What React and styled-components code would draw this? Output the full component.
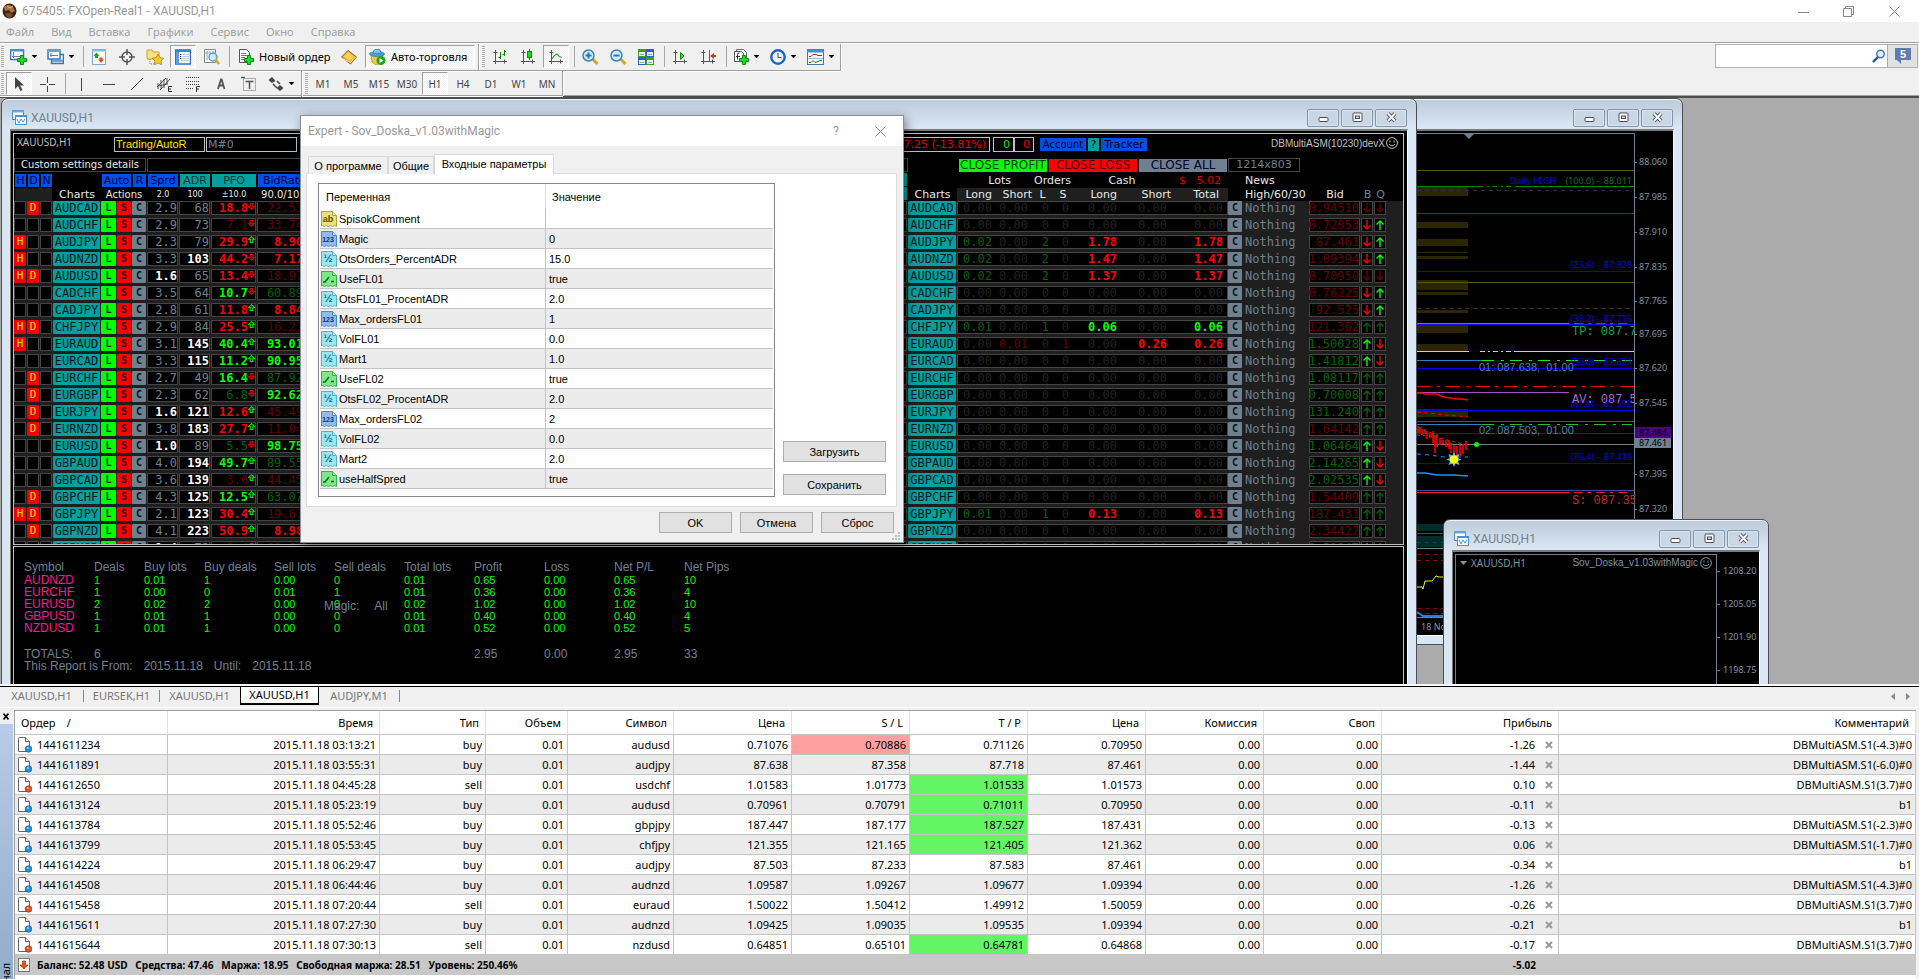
import React from 'react';
import styled, { createGlobalStyle, css } from 'styled-components';

const TAHOMA = '"Noto Sans", "Open Sans", sans-serif';
const SEGOE = 'Roboto, "Open Sans", sans-serif';
const MENU = '"Open Sans", "Noto Sans", sans-serif';
const ARIAL = '"Liberation Sans", Arial, sans-serif';
const VERDANA = '"DejaVu Sans", Verdana, sans-serif';
const MONO = '"DejaVu Sans Mono", "Liberation Mono", monospace';

const C = {
  face: '#f0f0f0',
  line: '#a0a0a0',
  slate: '#708090',
  teal: '#00a0a0',
  blue: '#0050e6',
  red: '#ff0000',
  lime: '#00ff00',
  dimRed: '#640000',
  dimGreen: '#006400',
  off: '#222222',
  grid: '#444444',
  board: '#1f1f1f',
};

const GlobalStyle = createGlobalStyle`
  *, *::before, *::after { box-sizing: border-box; }
  html, body, #root { height: 100%; }
  body { margin: 0; background: ${C.face}; color: #000; font: 11px/16px ${TAHOMA}; overflow: hidden; }
  button, input { font: inherit; color: inherit; margin: 0; padding: 0; border: 0; background: none; border-radius: 0; }
  table { border-collapse: separate; border-spacing: 0; table-layout: fixed; }
  th, td { padding: 0; font-weight: normal; }
  svg { display: block; flex: none; }
`;

const Page = styled.div`
  display: flex;
  flex-direction: column;
  height: 100vh;
  overflow: hidden;
`;

/* ---------- application title, menu, toolbars ---------- */

const TitleBar = styled.header`
  display: flex;
  align-items: center;
  flex: none;
  height: 22px;
  padding: 0 14px 0 2px;
  gap: 5px;
  background: #fff;
  color: #999;
  font: 12px/16px ${SEGOE};
`;
const AppTitle = styled.h1`
  margin: 0;
  flex: 1;
  font: inherit;
`;
const CaptionButton = styled.button`
  display: flex;
  justify-content: center;
  align-items: center;
  width: 40px;
  height: 20px;
  &:last-child { width: 32px; justify-content: flex-end; padding-right: 5px; }
`;
const MenuBar = styled.nav`
  display: flex;
  flex: none;
  align-items: center;
  gap: 17px;
  height: 20px;
  padding-left: 6px;
  color: #999;
  font: 11px/16px ${MENU};
`;
const Toolbars = styled.div`
  flex: none;
  display: flex;
  justify-content: space-between;
  align-items: flex-start;
  border-top: 1px solid ${C.line};
  border-bottom: 2px solid #4e4e4e;
  box-shadow: inset 0 1px #fff, inset 0 -1px ${C.line};
  padding-top: 1px;
`;
const Bars = styled.div`
  display: flex;
  flex-direction: column;
  align-items: flex-start;
`;
const Bar = styled.div`
  display: flex;
  align-items: stretch;
  height: ${(p) => p.$h}px;
  border-bottom: 1px solid ${C.line};
  border-right: 1px solid ${C.line};
  box-shadow: 0 1px #fff, 1px 0 #fff;
  padding: 1px 1px ${(p) => p.$h - 25}px 0;
`;
const Grip = styled.span`
  width: 3px;
  margin: 1px 1px 1px 1px;
  background: repeating-linear-gradient(#a9a9a9 0 1px, #f8f8f8 1px 2px);
`;
const BarEnd = styled.span`
  width: 2px;
  margin: -1px 1px -2px 1px;
  background: linear-gradient(90deg, ${C.line} 1px, #fff 1px);
`;
const Sep = styled.span`
  width: 1px;
  margin: 1px 1px 1px 4px;
  background: #a8a8a8;
`;
const pressed = css`
  border: 1px solid #a0a0a0;
  border-right-color: #fff;
  border-bottom-color: #fff;
  background: repeating-conic-gradient(#fff 0 25%, #f0f0f0 0 50%) 0 0 / 2px 2px;
`;
const Tool = styled.button`
  display: flex;
  align-items: center;
  justify-content: center;
  width: ${(p) => (p.$on ? 26 : 28)}px;
  margin: 0 ${(p) => (p.$on ? 1 : 0)}px;
  ${(p) => p.$on && pressed}
`;
const MenuTool = styled.button`
  display: flex;
  align-items: center;
  gap: 4px;
  width: 37px;
  padding-left: 5px;
`;
const WideTool = styled.button`
  display: flex;
  align-items: center;
  gap: 5px;
  width: ${(p) => p.$w}px;
  white-space: nowrap;
  padding-left: ${(p) => (p.$on ? 3 : 7)}px;
  margin: 0 ${(p) => (p.$on ? 2 : 0)}px;
  ${(p) => p.$on && pressed}
`;
const Period = styled(Tool)`
  font: 10px/14px ${TAHOMA};
  color: #444;
`;
const SearchBox = styled.div`
  display: flex;
  height: 24px;
  margin: 0 1px 0 0;
  border: 1px solid #b0b0b0;
  background: #fff;
  align-items: center;
`;
const SearchInput = styled.input`
  width: 156px;
  height: 20px;
  padding-left: 4px;
  outline: none;
`;
const ChatButton = styled.button`
  display: flex;
  align-items: center;
  justify-content: center;
  width: 30px;
  height: 22px;
  margin-left: 1px;
  border-left: 1px solid #b0b0b0;
  background: #e1e1e1;
`;

/* ---------- MDI desktop ---------- */

const Desktop = styled.main`
  position: relative;
  flex: 1;
  min-height: 0;
  overflow: hidden;
  background: #ababab;
`;
const Win = styled.section`
  position: absolute;
  left: ${(p) => p.$x}px;
  top: ${(p) => p.$y}px;
  width: ${(p) => p.$w}px;
  height: ${(p) => p.$h}px;
  display: flex;
  flex-direction: column;
  padding: 0 8px 8px;
  border: 1px solid #4b4f55;
  border-radius: 7px 7px 0 0;
  background: linear-gradient(#bccad9, #d9e6f3 28px, #d9e6f3);
  box-shadow: inset 0 1px #f2f6fa;
`;
const WinTitle = styled.header`
  display: flex;
  align-items: center;
  flex: none;
  height: 30px;
  padding: 7px 1px 0 2px;
  color: ${C.slate};
  font: 12px/20px ${SEGOE};
`;
const WinName = styled.h2`
  flex: 1;
  margin: 0 0 0 4px;
  font: inherit;
`;
const WinButtons = styled.div`
  display: flex;
  gap: 2px;
`;
const WinButton = styled.button`
  display: flex;
  align-items: center;
  justify-content: center;
  width: 32px;
  height: 18px;
  border: 1px solid #8293ab;
  border-radius: 2px;
  background: #c9d6e4;
  box-shadow: inset 0 0 0 1px #dbe5ef;
`;
const Client = styled.div`
  flex: 1;
  display: flex;
  flex-direction: column;
  min-height: 0;
  background: #000;
  border: 1px solid #777;
  border-top: 2px solid #7b7b7b;
  border-right-color: #fff;
  border-bottom-color: #fff;
  padding: ${(p) => p.$pad || '0'};
`;

/* ---------- trading board ---------- */

const Board = styled.div`
  flex: none;
  height: 412px;
  overflow: hidden;
  border: 1px solid #c0c0c0;
  color: #e8e8e8;
  font: 10px/13px ${VERDANA};
`;
const InfoBar = styled.div`
  display: flex;
  height: 24px;
  padding: 3px 5px 6px 3px;
  line-height: 13px;
`;
const ChartName = styled.span`
  width: 97px;
  color: #c0c0c0;
  font: 10px/11px ${TAHOMA};
`;
const Field = styled.span`
  width: ${(p) => p.$w}px;
  height: 15px;
  padding: 0 3px 0 1px;
  margin-left: ${(p) => p.$gap || 0}px;
  border: 1px solid #c0c0c0;
  color: ${(p) => p.$c};
  font: 11px/13px ${(p) => p.$font || VERDANA};
  text-align: ${(p) => p.$align || 'left'};
  white-space: nowrap;
`;
const InfoButton = styled.button`
  width: ${(p) => p.$w}px;
  height: 13px;
  margin: 1px 0 0 ${(p) => p.$gap || 2}px;
  background: ${(p) => p.$bg};
  color: ${(p) => p.$c || '#000028'};
  font: ${(p) => p.$size || 11}px/13px ${VERDANA};
  white-space: nowrap;
`;
const ExpertName = styled.span`
  display: flex;
  gap: 1px;
  margin-left: auto;
  color: #c0c0c0;
  font: 10px/13px ${ARIAL};
`;
const SettingsRow = styled.div`
  display: flex;
  height: 15px;
`;
const Outline = styled.span`
  width: ${(p) => p.$w}px;
  height: 14px;
  margin-left: ${(p) => p.$gap || 0}px;
  border: 1px solid ${C.grid};
  text-align: center;
  color: ${(p) => p.$c || '#e8e8e8'};
  font-size: ${(p) => p.$size || 10}px;
  line-height: 12px;
  white-space: nowrap;
`;
const Grids = styled.div`
  display: flex;
  background: linear-gradient(#000 28px, ${C.board} 28px);
`;
const BoardTable = styled.table`
  flex: none;
  width: ${(p) => p.$w}px;
  th { height: 14px; font: 11px/13px ${VERDANA}; overflow: visible; white-space: nowrap; }
  td { height: 17px; vertical-align: top; white-space: nowrap; }
`;
const Head = styled.div`
  height: 13px;
  margin: 0 ${(p) => (p.$join ? 0 : 1)}px;
  background: ${(p) => p.$bg || 'transparent'};
  color: ${(p) => p.$c || '#e8e8e8'};
  text-align: ${(p) => p.$align || 'center'};
  padding: 0 ${(p) => p.$pad || 0}px;
  font-size: ${(p) => p.$size || 11}px;
`;
const Cell = styled.div`
  height: 14px;
  margin: 0 1px 0 0;
  border: 1px solid ${C.grid};
  background: #000;
  color: ${(p) => p.$c || C.slate};
  font: ${(p) => (p.$b ? 'bold' : 'normal')} 12px/13px ${MONO};
  display: flex;
  justify-content: flex-end;
`;
const Chip = styled.button`
  display: block;
  width: calc(100% - 1px);
  height: 14px;
  background: ${(p) => p.$bg};
  color: ${(p) => p.$c || '#001818'};
  border-radius: 1px;
  font: ${(p) => (p.$b ? 'bold' : 'normal')} ${(p) => p.$size || 12}px/14px ${MONO};
  text-align: center;
`;
const Val = styled.div`
  height: 14px;
  border: 0 solid ${C.grid};
  border-width: 1px ${(p) => (p.$last ? 1 : 0)}px 1px ${(p) => (p.$first ? 1 : 0)}px;
  background: #000;
  color: ${(p) => p.$c || C.off};
  padding-right: 4px;
  text-align: right;
  font: ${(p) => (p.$b ? 'bold' : 'normal')} 12px/13px ${MONO};
`;
const News = styled.div`
  color: ${C.slate};
  padding-left: 2px;
  font: 12px/14px ${MONO};
`;
const Middle = styled.div`
  flex: 1;
  padding-right: 1px;
`;
const MiddleHead = styled.div`
  height: 13px;
  margin-bottom: 1px;
  background: ${C.teal};
`;
const MiddleRow = styled.div`
  height: 14px;
  margin-bottom: 3px;
  border: 1px solid ${C.grid};
  background: #000;
`;

/* ---------- report ---------- */

const Report = styled.div`
  position: relative;
  flex: 1;
  margin-top: 1px;
  padding: 14px 10px;
  border: 1px solid #c0c0c0;
  color: ${C.slate};
  font: 12px/13px ${ARIAL};
`;
const ReportTable = styled.table`
  width: 730px;
  th { text-align: left; height: 13px; white-space: nowrap; }
  td { height: 12px; line-height: 12px; font-size: 11px; color: ${C.lime}; }
  td:first-child { font-size: 12px; color: #ff1493; }
  tfoot td, tfoot td:first-child { height: 26px; font-size: 12px; color: ${C.slate}; vertical-align: bottom; }
`;
const ReportPeriod = styled.p`
  display: flex;
  gap: 11px;
  margin: 0;
`;
const MagicNote = styled.span`
  position: absolute;
  left: 310px;
  top: 53px;
  display: flex;
  gap: 15px;
`;

/* ---------- small chart window ---------- */

const SmallChart = styled.div`
  flex: 1;
  display: flex;
  color: #8593a1;
`;
const Plot = styled.div`
  flex: 1;
  display: flex;
  justify-content: space-between;
  align-items: flex-start;
  padding: 1px 4px 0 4px;
  border: 1px solid ${C.slate};
  font-size: 10px;
  line-height: 14px;
`;
const PlotLabel = styled.span`
  display: flex;
  align-items: center;
  gap: ${(p) => p.$gap}px;
  font-family: ${(p) => p.$font};
`;
const Axis = styled.div`
  width: 42px;
  padding-top: 9px;
`;
const Tick = styled.div`
  display: flex;
  align-items: center;
  gap: 3px;
  height: 16px;
  margin-bottom: 17px;
  font: 9px/16px ${TAHOMA};
  &::before { content: ''; width: 3px; height: 1px; background: ${C.slate}; }
`;

/* ---------- dialog ---------- */

const Dialog = styled.section`
  position: absolute;
  left: 300px;
  top: 17px;
  width: 604px;
  height: 428px;
  display: flex;
  flex-direction: column;
  border: 1px solid #8a939c;
  background: ${C.face};
  box-shadow: 2px 3px 10px rgba(0, 0, 0, 0.45);
  font: 11px/16px ${ARIAL};
`;
const DialogTitle = styled.header`
  display: flex;
  align-items: center;
  flex: none;
  height: 30px;
  padding: 0 17px 0 7px;
  background: #fff;
  color: #999;
  font: 12px/16px ${SEGOE};
`;
const DialogName = styled.h2`
  flex: 1;
  margin: 0;
  font: inherit;
`;
const DialogButton = styled.button`
  margin-left: 36px;
`;
const Tabs = styled.div`
  display: flex;
  align-items: flex-end;
  height: 28px;
  padding: 0 7px;
`;
const Tab = styled.button`
  height: ${(p) => (p.$on ? 21 : 18)}px;
  width: ${(p) => p.$w}px;
  margin-bottom: ${(p) => (p.$on ? -1 : 0)}px;
  border: 1px solid #d9d9d9;
  border-bottom: 0;
  background: ${(p) => (p.$on ? '#fff' : C.face)};
  padding-bottom: ${(p) => (p.$on ? 3 : 0)}px;
  z-index: 1;
  & + & { border-left: ${(p) => (p.$on ? '1px solid #d9d9d9' : '0')}; }
`;
const Pane = styled.div`
  display: flex;
  flex: none;
  height: 334px;
  margin: -1px 6px 0 5px;
  padding: 9px 10px 10px 11px;
  border: 1px solid #dcdcdc;
  background: #fff;
  gap: 8px;
`;
const ParamBox = styled.div`
  flex: 1;
  height: 314px;
  padding: 0 1px;
  border: 1px solid #828790;
`;
const ParamTable = styled.table`
  width: 100%;
  th { height: 25px; text-align: left; padding-left: 6px; }
  th:first-child { border-right: 1px solid #e2e2e2; }
  td { height: 20px; border-bottom: 1px solid #c4c4c4; padding-left: 3px; }
  td:first-child { border-right: 1px solid #c4c4c4; padding-left: 1px; }
  tr:nth-child(even) td { background: #ebebeb; }
`;
const ParamName = styled.span`
  display: flex;
  align-items: center;
  gap: 2px;
`;
const SideButtons = styled.div`
  display: flex;
  flex-direction: column;
  justify-content: flex-end;
  gap: 12px;
  padding-bottom: 1px;
`;
const PushButton = styled.button`
  width: ${(p) => p.$w || 73}px;
  height: 21px;
  border: 1px solid #adadad;
  background: #e1e1e1;
`;
const DialogFooter = styled.footer`
  display: flex;
  justify-content: flex-end;
  gap: 8px;
  padding: 5px 9px 0;
`;
const SizeGrip = styled.span`
  position: absolute;
  right: 3px;
  bottom: 2px;
`;

/* ---------- chart tabs and terminal ---------- */

const ChartTabs = styled.nav`
  flex: none;
  display: flex;
  height: 22px;
  padding: 0 8px 2px 0;
  border-top: 1px solid #000;
  box-shadow: 0 -2px #f8f8f8, inset 0 -1px #fff;
  margin-top: 2px;
  color: #777;
`;
const ChartTab = styled.button`
  width: ${(p) => p.$w}px;
  height: 18px;
  ${(p) =>
    p.$on
      ? css`
          background: #fff;
          color: #000;
          border: 1px solid #000;
          border-width: 0 1px 2px 1px;
        `
      : css`
          &::after { content: ''; float: right; width: 1px; height: 12px; margin-top: 2px; background: ${p.$bar ? '#888' : 'transparent'}; }
        `}
`;
const TabArrows = styled.span`
  display: flex;
  align-items: center;
  gap: 10px;
  margin-left: auto;
`;
const Terminal = styled.section`
  flex: none;
  display: flex;
  height: 271px;
  padding-top: 2px;
`;
const Side = styled.aside`
  display: flex;
  flex-direction: column;
  width: 14px;
  flex: none;
`;
const SideClose = styled.button`
  display: flex;
  padding: 3px 0 0 3px;
  height: 14px;
`;
const SideLabel = styled.div`
  flex: 1;
  width: 13px;
  display: flex;
  align-items: flex-end;
  overflow: hidden;
  background: linear-gradient(#b5cde8, #93acca);
`;
const SideText = styled.span`
  writing-mode: vertical-rl;
  transform: rotate(180deg);
  line-height: 12px;
  height: 16px;
  direction: rtl;
`;
const OrdersBox = styled.div`
  flex: 1;
  border: 1px solid ${C.line};
  border-width: 1px 0 0 1px;
  margin-right: 3px;
  background: #fff;
  overflow: hidden;
`;
const Orders = styled.table`
  width: 100%;
  th, td { text-align: right; white-space: nowrap; }
  th { height: 24px; padding-right: 6px; border-right: 1px solid #e2e2e2; border-bottom: 1px solid #c4c4c4; }
  th:first-child { text-align: left; padding-left: 6px; }
  tbody td { height: 20px; padding-right: 3px; border-right: 1px solid #c4c4c4; border-bottom: 1px solid #c4c4c4; }
  tbody tr:nth-child(even) td { background: #ebebeb; }
  tbody tr td[data-hit='sl'] { background: #ffa0a0; }
  tbody tr:nth-child(n) td[data-hit='tp'] { background: #64f564; }
  tfoot td { height: 20px; background: #c8c8c8; font-weight: bold; font-size: 10px; }
`;
const OrderId = styled.span`
  display: flex;
  align-items: center;
  gap: 5px;
  padding-left: 3px;
`;
const ProfitCell = styled.span`
  display: flex;
  align-items: center;
  justify-content: flex-end;
  gap: 10px;
  padding-right: 2px;
`;
const Summary = styled.span`
  display: flex;
  align-items: center;
  gap: 6px;
  padding-left: 3px;
`;

/* ---------- icons ---------- */

const Svg = ({ w = 16, h = 16, children, ...rest }) => (
  <svg width={w} height={h} viewBox={`0 0 ${w} ${h}`} aria-hidden="true" {...rest}>
    {children}
  </svg>
);
const Arrow = () => (
  <Svg w={7} h={4}>
    <path d="M1 0h5L3.500 3z" fill="#000" stroke="#000" strokeWidth=".5" />
  </Svg>
);
const Plus = ({ x = 0, y = 0 }) => (
  <path transform={`translate(${x} ${y})`} d="M3.500 .5h3v3h3v3h-3v3h-3v-3h-3v-3h3z" fill="#15e030" stroke="#0a8a0a" />
);
const axes = <path d="M3.500 1v14M1 12.500h14M1.500 3.500h4M12.500 10.500v4" stroke="#555" fill="none" />;

const icons = {
  app: (
    <Svg w={15} h={16}>
      <ellipse cx="7.500" cy="8" rx="7" ry="7.500" fill="#3b2418" />
      <path d="M2 4q5-4 9 0l2 4-4 2-2-3-4 1z" fill="#b0713c" />
      <path d="M3 11q4-3 8 1-3 4-6 2z" fill="#7a4a2c" />
      <path d="M5 3l3 2 3-2" stroke="#d9b88c" fill="none" />
    </Svg>
  ),
  newChart: (
    <Svg w={17}>
      <rect x="0.500" y="0.500" width="13" height="10" fill="#fff" stroke="#3a78b8" strokeWidth="1.500" />
      <path d="M0 0h14v2.500H0z" fill="#4a8ccc" />
      <path d="M3.500 3v6M2 7.500h8" stroke="#77a" />
      <Plus x={7} y={6} />
    </Svg>
  ),
  profiles: (
    <Svg w={17}>
      <rect x="4.500" y="5.500" width="12" height="9" fill="#dcebf8" stroke="#3a78b8" strokeWidth="1.500" />
      <rect x="1" y="1" width="12" height="9" fill="#fff" stroke="#3a78b8" strokeWidth="1.500" />
      <path d="M1 1h12v2H1zM5 11h11v2H5z" fill="#6aa2d8" />
      <path d="M4 4v4M3 6.500h8" stroke="#77a" />
    </Svg>
  ),
  market: (
    <Svg>
      <rect x="1.500" y="0.500" width="13" height="15" fill="#fff" stroke="#7aa7d8" />
      <path d="M1 .5h14v2H1z" fill="#8ab8e8" />
      <path d="M2.500 7l3-3.500 3 3.500H7v2H4V7z" fill="#18a818" />
      <path d="M7 10.500l3 3.500 3-3.500h-1.500V8.500h-3v2z" fill="#e04a1c" />
    </Svg>
  ),
  target: (
    <Svg>
      <circle cx="8" cy="8" r="5" fill="none" stroke="#555" strokeWidth="1.500" />
      <path d="M8 0v6M8 10v6M0 8h6M10 8h6" stroke="#555" strokeWidth="1.500" />
    </Svg>
  ),
  favorites: (
    <Svg w={18}>
      <path d="M1 1h5l1 2h6v7H1z" fill="#fbe27a" stroke="#c9a227" />
      <path d="M4 10v5h4" stroke="#777" strokeDasharray="1 1" fill="none" />
      <path d="M12 5l1.900 3.600 3.900.6-2.800 2.800.7 3.800L12 14.100 8.300 15.800l.7-3.800-2.800-2.800 3.900-.6z" fill="#f7c928" stroke="#a67c00" strokeWidth=".7" />
    </Svg>
  ),
  navigator: (
    <Svg>
      <rect x="0.500" y="1" width="15" height="14" fill="#fff" stroke="#2f6fc0" strokeWidth="1.500" />
      <path d="M1 1h14v2H1z" fill="#3b84d8" />
      <path d="M1 3h3v12H1z" fill="#5d9de0" />
      <path d="M6 5.500h8M6 7.500h8M6 9.500h8M6 11.500h8" stroke="#b8cfe8" />
      <path d="M5 5.500h1M5 7.500h1M5 9.500h1" stroke="#223" />
    </Svg>
  ),
  tester: (
    <Svg w={17}>
      <path d="M1.500 .5h11v13h-11z" fill="#fff" stroke="#888" />
      <path d="M4 2v9M7 2v5M10 2v6M2 4h4" stroke="#8aa" />
      <circle cx="10" cy="8" r="4" fill="#cfe8fa" fillOpacity=".85" stroke="#5a9bd0" strokeWidth="1.400" />
      <path d="M13 11l3 4" stroke="#d8a520" strokeWidth="2.400" />
    </Svg>
  ),
  order: (
    <Svg>
      <path d="M1.500 .5h7l3 3v10h-10z" fill="#fff" stroke="#555" />
      <path d="M3 4.500h5M3 6.500h7M3 8.500h4M3 10.500h3" stroke="#777" />
      <Plus x={6} y={6} />
    </Svg>
  ),
  book: (
    <Svg>
      <path d="M.500 8L7 1.500l8.500 6.500-6 7z" fill="#e8a820" stroke="#8f6310" />
      <path d="M2.500 7.500L7 3l6 4.500-4 4.500z" fill="#f8d060" />
      <path d="M1.500 9.500l8 4 5-5.500" stroke="#fff3c8" fill="none" strokeWidth=".8" />
    </Svg>
  ),
  robot: (
    <Svg w={17}>
      <path d="M2 6h12l-2 8-5 2-4-3z" fill="#f0c93c" stroke="#b08a12" strokeWidth=".7" />
      <ellipse cx="8" cy="5" rx="7.500" ry="2.500" fill="#4aa0d8" stroke="#2a78b0" strokeWidth=".7" />
      <path d="M4 4q0-4 4-4t4 4q-4 1.500-8 0z" fill="#7cc4ee" stroke="#2a78b0" strokeWidth=".7" />
      <circle cx="12" cy="11.500" r="4.500" fill="#18a818" />
      <path d="M10.500 9l4 2.500-4 2.500z" fill="#fff" />
    </Svg>
  ),
  bars: (
    <Svg>
      {axes}
      <path d="M8.500 3v7M6.500 8.500h2M12.500 1v6M10.500 5.500h2M12 2.500h2" stroke="#0a8a0a" fill="none" />
    </Svg>
  ),
  candles: (
    <Svg>
      {axes}
      <path d="M9.500 0v11" stroke="#0a8a0a" />
      <rect x="7.500" y="2.500" width="4" height="6" fill="#22d822" stroke="#0a8a0a" />
    </Svg>
  ),
  lineChart: (
    <Svg>
      {axes}
      <path d="M4 10q4-7 6-4t4 2" stroke="#2aa02a" fill="none" strokeWidth="1.200" />
    </Svg>
  ),
  zoomIn: (
    <Svg w={17}>
      <path d="M10.500 10l5 5" stroke="#d8a520" strokeWidth="3" />
      <circle cx="6.500" cy="6.500" r="5.500" fill="#d3ecfb" stroke="#3b84c0" strokeWidth="1.500" />
      <path d="M3.500 6.500h6M6.500 3.500v6" stroke="#2f76b8" strokeWidth="2" />
    </Svg>
  ),
  zoomOut: (
    <Svg w={17}>
      <path d="M10.500 10l5 5" stroke="#d8a520" strokeWidth="3" />
      <circle cx="6.500" cy="6.500" r="5.500" fill="#d3ecfb" stroke="#3b84c0" strokeWidth="1.500" />
      <path d="M3.500 6.500h6" stroke="#2f76b8" strokeWidth="2" />
    </Svg>
  ),
  tile: (
    <Svg>
      <path d="M0 0h8v8H0zM8 8h8v8H8z" fill="#3fa01c" />
      <path d="M8 0h8v8H8zM0 8h8v8H0z" fill="#2a62c8" />
      <path d="M1 3h6v4H1zM9 3h6v4H9zM1 11h6v4H1zM9 11h6v4H9z" fill="#e9f2fb" />
      <path d="M2 5.500h4M10 5.500h4M2 13.500h4M10 13.500h4" stroke="#8ab" />
    </Svg>
  ),
  shift: (
    <Svg>
      {axes}
      <path d="M8.500 3.500v7l3.500-3.500z" fill="#3ae03a" stroke="#0a8a0a" />
    </Svg>
  ),
  scroll: (
    <Svg>
      {axes}
      <path d="M9.500 1v11" stroke="#3070b0" />
      <path d="M10 7l4-3v2h2v2h-2v2z" fill="#d03a10" />
    </Svg>
  ),
  indicators: (
    <Svg>
      <path d="M3.500 2.500v-2h7l3 3v8h-3" fill="#fff" stroke="#666" />
      <path d="M1.500 2.500h7l2 2v8h-9z" fill="#fff" stroke="#555" />
      <path d="M6.500 4q-2-.5-2 1.500v5M3 7.500h4" stroke="#333" fill="none" />
      <Plus x={6} y={6} />
    </Svg>
  ),
  clock: (
    <Svg>
      <circle cx="8" cy="8" r="6.700" fill="#eaf2fa" stroke="#1c64c0" strokeWidth="2.400" />
      <path d="M8 4v4.500h3.500" stroke="#444" fill="none" />
    </Svg>
  ),
  template: (
    <Svg w={17}>
      <rect x="0.500" y="0.500" width="16" height="15" fill="#f6fbff" stroke="#3a78b8" />
      <path d="M0 .5h17v3H0z" fill="#4a8ccc" />
      <path d="M2 7.500h2l2-2h3l2 1h4" stroke="#a03010" fill="none" />
      <path d="M1 9.500h15" stroke="#8ab8e8" />
      <path d="M2 13.500h2l2-2 2 2 3-1 2-1h2" stroke="#208020" fill="none" />
    </Svg>
  ),
  cursor: (
    <Svg>
      <path d="M4 1v12l3-3 2.500 5 2-1L9 9.500h4z" fill="#444" />
    </Svg>
  ),
  cross: (
    <Svg>
      <path d="M8.500 1v6M8.500 10v6M1 8.500h6M10 8.500h6" stroke="#444" />
    </Svg>
  ),
  vline: (
    <Svg>
      <path d="M8.500 2v13" stroke="#444" />
    </Svg>
  ),
  hline: (
    <Svg>
      <path d="M2 8.500h12" stroke="#444" />
    </Svg>
  ),
  trend: (
    <Svg>
      <path d="M2 14L14 2" stroke="#444" />
    </Svg>
  ),
  channel: (
    <Svg>
      <path d="M0 11L9 2M3 14L13 3M1 7v6M4 4v9M7 3v9M10 2v6M1 10l10-2" stroke="#444" strokeWidth=".9" />
      <path d="M15 10.500h-3.500v5H15M11.500 13H14" stroke="#333" fill="none" />
    </Svg>
  ),
  fibo: (
    <Svg>
      <path d="M1 1.500h14M1 5.500h14M1 8.500h14M1 12.500h8" stroke="#444" strokeDasharray="1 1" />
      <path d="M15 10.500h-3.500V16M11.500 13H14" stroke="#333" fill="none" />
    </Svg>
  ),
  letterA: (
    <Svg>
      <path d="M5 13L8 3.500h.600L11.500 13M6 9.500h5" stroke="#555" fill="none" strokeWidth="1.800" />
    </Svg>
  ),
  label: (
    <Svg>
      <rect x="2.500" y="2.500" width="12" height="12" fill="none" stroke="#666" strokeDasharray="1 1" />
      <path d="M0 1.500h4M4.500 5.500h8M8.500 5v8" stroke="#555" strokeWidth="1.500" />
    </Svg>
  ),
  shapes: (
    <Svg>
      <path d="M4 1l3.500 4L4 7 .5 4zM12 9l3.500 3L12 15 8.500 12z" fill="#444" />
      <path d="M5 8l4 4M9 5l3 3" stroke="#444" strokeWidth="1.500" />
    </Svg>
  ),
  search: (
    <Svg w={14} h={14}>
      <circle cx="8.500" cy="5" r="3.700" fill="#eaf4ff" stroke="#3a78d0" strokeWidth="1.500" />
      <path d="M6 8l-5 5" stroke="#1c50b0" strokeWidth="2.400" />
    </Svg>
  ),
  chart: (
    <Svg w={15} h={15}>
      <rect x="0.500" y="0.500" width="11" height="9" fill="#fff" stroke="#4a90d8" />
      <path d="M0 .5h12v2H0z" fill="#6aa8e8" />
      <rect x="3.500" y="5.500" width="11" height="9" fill="#fff" stroke="#4a90d8" />
      <path d="M3 5.500h12v1.500H3z" fill="#4a90d8" />
      <path d="M5 9l2 4 2-4 2 3 2-3" stroke="#4a90d8" fill="none" />
    </Svg>
  ),
  smile: (
    <Svg w={12} h={12}>
      <circle cx="6" cy="6" r="5.400" fill="none" stroke="currentColor" />
      <path d="M4 3.500v2M8 3.500v2M3 7q3 3.500 6 0" stroke="currentColor" fill="none" />
    </Svg>
  ),
  min: (
    <Svg w={11} h={11}>
      <rect x="1" y="5.500" width="9" height="4" rx="1" fill="#fff" stroke="#4c4c60" />
    </Svg>
  ),
  max: (
    <Svg w={11} h={11}>
      <rect x="1" y="1" width="9" height="8.500" rx="1" fill="#fff" stroke="#4c4c60" />
      <rect x="3.500" y="4" width="4" height="2.500" fill="#cddae8" stroke="#4c4c60" />
    </Svg>
  ),
  close: (
    <Svg w={11} h={11}>
      <path d="M2 1.500l7 7.500M9 1.500L2 9" stroke="#4c4c60" strokeWidth="4" />
      <path d="M2 1.500l7 7.500M9 1.500L2 9" stroke="#fff" strokeWidth="2" />
    </Svg>
  ),
};

const ParamIcon = ({ kind }) => {
  const tone = {
    ab: ['#ece07c', '#b5a32c', '#5c4d00'],
    int: ['#8dbdf0', '#4b88c8', '#0a3570'],
    real: ['#9be6f2', '#4fb4c8', '#0e6a80'],
    bool: ['#7fe68a', '#35b14a', '#0b6a1c'],
  }[kind];
  const mark = { ab: 'ab', int: '123', real: '½' }[kind];
  return (
    <Svg>
      <path d="M.5.500h11l4 4v11l-2-1-2 1-2-1-2 1-2-1-2 1-2-1-1 .5z" fill={tone[0]} stroke={tone[1]} />
      <path d="M11.500.500v4h4" fill="#fff" fillOpacity=".6" stroke={tone[1]} />
      {mark ? (
        <text x="7" y="11" textAnchor="middle" fontSize={{ ab: 9, int: 7, real: 11 }[kind]} fontWeight="bold" fontFamily="Liberation Sans" fill={tone[2]}>
          {mark}
        </text>
      ) : (
        <path d="M2 11h2l4-5M10 10.500h3" stroke={tone[2]} strokeWidth="1.500" fill="none" />
      )}
    </Svg>
  );
};

const OrderIcon = ({ buy }) => (
  <Svg w={14} h={16}>
    <path d="M.5 1.500q0-1 1-1h6l4 4v10h-11z" fill="#fff" stroke="#666" />
    <path d="M7.500.500v4h4" fill="#eee" stroke="#666" />
    <circle cx="10.500" cy="12" r="3.300" fill={buy ? '#1c94e0' : '#e8501c'} stroke={buy ? '#0a5c9c' : '#a02c08'} strokeWidth=".7" />
    <circle cx="9.800" cy="11" r="1" fill="#fff" fillOpacity=".6" />
  </Svg>
);

const PfoArrow = ({ up }) => (
  <Svg w={7} h={8}>
    {up ? (
      <path d="M3.500 .7L6.300 3.500H4.800V6.500H2.200V3.500H.7z" fill="none" stroke="#00e000" strokeWidth="1.200" />
    ) : (
      <path d="M3.500 7.300L6.300 4.500H4.800V1.500H2.200v3H.7z" fill="none" stroke="#e00000" strokeWidth="1.200" />
    )}
  </Svg>
);

const Trend = ({ dir }) => {
  const up = dir === 'U' || dir === 'u';
  const color = { U: '#00ff00', u: '#006400', D: '#ff0000', d: '#640000' }[dir];
  return (
    <Svg w={10} h={12}>
      <path d={up ? 'M5 11V2M1.500 5.500L5 2l3.500 3.500' : 'M5 1v9M1.500 6.500L5 10l3.500-3.500'} stroke={color} fill="none" strokeWidth="1.400" />
    </Svg>
  );
};

/* ---------- data ---------- */

const R = C.red;
const G = '#00ff00';
const r = C.dimRed;
const g = C.dimGreen;

// symbol, flags, spread, adr, pfo, pfo colour, pfo arrow up, rating, rating colour
const pairs = [
  ['AUDCAD', 'D', '2.9', '68', '18.8', R, 0, '22.51', r],
  ['AUDCHF', '', '2.9', '73', '7.1', r, 0, '33.74', r],
  ['AUDJPY', 'H', '2.3', '79', '29.9', R, 1, '8.90', R],
  ['AUDNZD', 'H', '3.3', '103', '44.2', R, 0, '7.17', R],
  ['AUDUSD', 'HD', '1.6', '65', '13.4', R, 0, '18.97', r],
  ['CADCHF', '', '3.5', '64', '10.7', G, 0, '60.89', g],
  ['CADJPY', '', '2.8', '61', '11.8', R, 1, '8.84', R],
  ['CHFJPY', 'HD', '2.9', '84', '25.5', R, 1, '16.21', r],
  ['EURAUD', 'H', '3.1', '145', '40.4', G, 1, '93.01', G],
  ['EURCAD', '', '3.3', '115', '11.2', G, 1, '90.95', G],
  ['EURCHF', 'D', '2.7', '49', '16.4', G, 0, '87.92', g],
  ['EURGBP', 'D', '2.3', '62', '6.8', g, 0, '92.62', G],
  ['EURJPY', 'D', '1.6', '121', '12.6', R, 1, '45.49', r],
  ['EURNZD', 'D', '3.8', '183', '27.7', R, 1, '11.04', r],
  ['EURUSD', '', '1.0', '89', '5.5', g, 0, '98.75', G],
  ['GBPAUD', '', '4.0', '194', '49.7', G, 1, '89.55', g],
  ['GBPCAD', '', '3.6', '139', '3.0', r, 1, '44.45', r],
  ['GBPCHF', 'D', '4.3', '125', '12.5', G, 1, '63.07', g],
  ['GBPJPY', 'HD', '2.1', '123', '30.4', R, 1, '19.61', r],
  ['GBPNZD', 'D', '4.1', '223', '50.9', R, 1, '8.98', R],
  ['GBPUSD', '', '1.4', '78', '2.4', r, 0, '18.66', r],
];

const quotes = [
  ['0.94510', r, 'dd'], ['0.72053', r, 'DU'], ['87.461', r, 'DU'], ['1.09394', r, 'DU'],
  ['0.70950', r, 'dd'], ['0.76225', r, 'DU'], ['92.525', r, 'DU'], ['121.362', r, 'uu'],
  ['1.50028', g, 'UD'], ['1.41812', g, 'UD'], ['1.08117', g, 'uu'], ['0.70008', g, 'uu'],
  ['131.240', g, 'uu'], ['1.64142', r, 'uu'], ['1.06464', g, 'UD'], ['2.14265', g, 'UD'],
  ['2.02535', g, 'UD'], ['1.54409', r, 'uu'], ['187.431', r, 'uu'], ['2.34427', r, 'uu'],
  ['1.51847', g, 'UD'],
];

// lots long, lots short, orders long, orders short, cash long, cash short, total, colour of cash
const positions = {
  AUDJPY: ['0.02', '0.00', '2', '0', '1.78', '0.00', '1.78', R],
  AUDNZD: ['0.02', '0.00', '2', '0', '1.47', '0.00', '1.47', R],
  AUDUSD: ['0.02', '0.00', '2', '0', '1.37', '0.00', '1.37', R],
  CHFJPY: ['0.01', '0.00', '1', '0', '0.06', '0.00', '0.06', G],
  EURAUD: ['0.00', '0.01', '0', '1', '0.00', '0.26', '0.26', R],
  GBPJPY: ['0.01', '0.00', '1', '0', '0.13', '0.00', '0.13', R],
};
const noPosition = ['0.00', '0.00', '0', '0', '0.00', '0.00', '0.00', C.off];

const params = [
  ['ab', 'SpisokComment', ''],
  ['int', 'Magic', '0'],
  ['real', 'OtsOrders_PercentADR', '15.0'],
  ['bool', 'UseFL01', 'true'],
  ['real', 'OtsFL01_ProcentADR', '2.0'],
  ['int', 'Max_ordersFL01', '1'],
  ['real', 'VolFL01', '0.0'],
  ['real', 'Mart1', '1.0'],
  ['bool', 'UseFL02', 'true'],
  ['real', 'OtsFL02_ProcentADR', '2.0'],
  ['int', 'Max_ordersFL02', '2'],
  ['real', 'VolFL02', '0.0'],
  ['real', 'Mart2', '2.0'],
  ['bool', 'useHalfSpred', 'true'],
];

const reportHead = ['Symbol', 'Deals', 'Buy lots', 'Buy deals', 'Sell lots', 'Sell deals', 'Total lots', 'Profit', 'Loss', 'Net P/L', 'Net Pips'];
const reportCols = [70, 50, 60, 70, 60, 70, 70, 70, 70, 70, 70];
const report = [
  ['AUDNZD', '1', '0.01', '1', '0.00', '0', '0.01', '0.65', '0.00', '0.65', '10'],
  ['EURCHF', '1', '0.00', '0', '0.01', '1', '0.01', '0.36', '0.00', '0.36', '4'],
  ['EURUSD', '2', '0.02', '2', '0.00', '0', '0.02', '1.02', '0.00', '1.02', '10'],
  ['GBPUSD', '1', '0.01', '1', '0.00', '0', '0.01', '0.40', '0.00', '0.40', '4'],
  ['NZDUSD', '1', '0.01', '1', '0.00', '0', '0.01', '0.52', '0.00', '0.52', '5'],
];

const orderCols = [153, 212, 106, 82, 106, 118, 118, 118, 118, 118, 118, 177];
const orderHead = ['Ордер', 'Время', 'Тип', 'Объем', 'Символ', 'Цена', 'S / L', 'T / P', 'Цена', 'Комиссия', 'Своп', 'Прибыль', 'Комментарий'];
const orders = [
  ['1441611234', '03:13:21', 'buy', 'audusd', '0.71076', '0.70886', '0.71126', '0.70950', '-1.26', 'DBMultiASM.S1(-4.3)#0', 'sl'],
  ['1441611891', '03:55:31', 'buy', 'audjpy', '87.638', '87.358', '87.718', '87.461', '-1.44', 'DBMultiASM.S1(-6.0)#0', ''],
  ['1441612650', '04:45:28', 'sell', 'usdchf', '1.01583', '1.01773', '1.01533', '1.01573', '0.10', 'DBMultiASM.S1(3.7)#0', 'tp'],
  ['1441613124', '05:23:19', 'buy', 'audusd', '0.70961', '0.70791', '0.71011', '0.70950', '-0.11', 'b1', 'tp'],
  ['1441613784', '05:52:46', 'buy', 'gbpjpy', '187.447', '187.177', '187.527', '187.431', '-0.13', 'DBMultiASM.S1(-2.3)#0', 'tp'],
  ['1441613799', '05:53:45', 'buy', 'chfjpy', '121.355', '121.165', '121.405', '121.362', '0.06', 'DBMultiASM.S1(-1.7)#0', 'tp'],
  ['1441614224', '06:29:47', 'buy', 'audjpy', '87.503', '87.233', '87.583', '87.461', '-0.34', 'b1', ''],
  ['1441614508', '06:44:46', 'buy', 'audnzd', '1.09587', '1.09267', '1.09677', '1.09394', '-1.26', 'DBMultiASM.S1(-4.3)#0', ''],
  ['1441615458', '07:20:44', 'sell', 'euraud', '1.50022', '1.50412', '1.49912', '1.50059', '-0.26', 'DBMultiASM.S1(3.7)#0', ''],
  ['1441615611', '07:27:30', 'buy', 'audnzd', '1.09425', '1.09035', '1.09535', '1.09394', '-0.21', 'b1', ''],
  ['1441615644', '07:30:13', 'sell', 'nzdusd', '0.64851', '0.65101', '0.64781', '0.64868', '-0.17', 'DBMultiASM.S1(3.7)#0', 'tp'],
];

const Cols = ({ widths, rest }) => (
  <colgroup>
    {widths.map((w, i) => (
      <col key={i} width={w} />
    ))}
    {rest && <col />}
  </colgroup>
);

/* ---------- parts ---------- */

const WindowFrame = ({ title, x, y, w, h, pad, children }) => (
  <Win $x={x} $y={y} $w={w} $h={h} aria-label={title}>
    <WinTitle>
      {icons.chart}
      <WinName>{title}</WinName>
      <WinButtons>
        <WinButton aria-label="Свернуть">{icons.min}</WinButton>
        <WinButton aria-label="Развернуть">{icons.max}</WinButton>
        <WinButton aria-label="Закрыть">{icons.close}</WinButton>
      </WinButtons>
    </WinTitle>
    <Client $pad={pad}>{children}</Client>
  </Win>
);

const T = ({ icon, on, label }) => (
  <Tool $on={on} aria-label={label || icon}>
    {icons[icon]}
  </Tool>
);
const M = ({ icon }) => (
  <MenuTool aria-label={icon}>
    {icons[icon]}
    <Arrow />
  </MenuTool>
);

const TopBars = () => (
  <Toolbars>
    <Bars>
      <Bar role="toolbar" $h={27}>
        <Grip />
        <M icon="newChart" />
        <M icon="profiles" />
        <Sep />
        <T icon="market" />
        <T icon="target" />
        <T icon="favorites" />
        <T icon="navigator" on />
        <T icon="tester" />
        <Sep />
        <WideTool $w={104}>
          {icons.order}
          Новый ордер
        </WideTool>
        <T icon="book" />
        <WideTool $w={110} $on>
          {icons.robot}
          Авто-торговля
        </WideTool>
        <BarEnd />
        <Grip />
        <T icon="bars" />
        <T icon="candles" />
        <T icon="lineChart" on />
        <Sep />
        <T icon="zoomIn" />
        <T icon="zoomOut" />
        <T icon="tile" />
        <Sep />
        <T icon="shift" />
        <T icon="scroll" />
        <Sep />
        <M icon="indicators" />
        <M icon="clock" />
        <M icon="template" />
      </Bar>
      <Bar role="toolbar" $h={25}>
        <Grip />
        <T icon="cursor" on />
        <T icon="cross" />
        <Sep />
        {['vline', 'hline', 'trend', 'channel', 'fibo', 'letterA', 'label'].map((i) => (
          <T key={i} icon={i} />
        ))}
        <M icon="shapes" />
        <BarEnd />
        <Grip />
        {['M1', 'M5', 'M15', 'M30', 'H1', 'H4', 'D1', 'W1', 'MN'].map((p) => (
          <Period key={p} $on={p === 'H1'}>
            {p}
          </Period>
        ))}
      </Bar>
    </Bars>
    <SearchBox>
      <SearchInput type="text" aria-label="Поиск" />
      {icons.search}
      <ChatButton aria-label="Чат">
        <Svg w={16} h={16}>
          <path d="M0 0h16v12H6v4l-4-4H0z" fill="#5f7db0" />
          <text x="8" y="10" textAnchor="middle" fontSize="11" fontWeight="bold" fontFamily="Liberation Sans" fill="#fff">
            5
          </text>
        </Svg>
      </ChatButton>
    </SearchBox>
  </Toolbars>
);

const LeftGrid = () => (
  <BoardTable $w={291}>
    <Cols widths={[13, 13, 13, 48, 16, 15, 15, 32, 32, 46, 48]} />
    <thead>
      <tr>
        <th><Head $bg={C.blue} $c="#000050">H</Head></th>
        <th><Head $bg={C.blue} $c="#000050">D</Head></th>
        <th><Head $bg={C.blue} $c="#000050">N</Head></th>
        <th />
        <th colSpan={2}><Head $bg={C.blue} $c="#000050">Auto</Head></th>
        <th><Head $bg={C.blue} $c="#000050">R</Head></th>
        <th><Head $bg={C.blue} $c="#000050">Sprd</Head></th>
        <th><Head $bg={C.teal} $c="#003838">ADR</Head></th>
        <th><Head $bg={C.teal} $c="#003838">PFO</Head></th>
        <th><Head $bg={C.blue} $c="#000050" $align="left" $pad={5}>BidRate</Head></th>
      </tr>
      <tr>
        <th colSpan={3}><Head $bg={C.board} /></th>
        <th><Head>Charts</Head></th>
        <th colSpan={3}><Head $size={10}>Actions</Head></th>
        <th><Head $size={8}>2.0</Head></th>
        <th><Head $size={8}>100</Head></th>
        <th><Head $size={8}>±10.0</Head></th>
        <th><Head $align="left" $pad={3} $size={10}>90.0/10.0</Head></th>
      </tr>
    </thead>
    <tbody>
      {pairs.map(([sym, flags, sprd, adr, pfo, pc, up, rate, rc]) => (
        <tr key={sym}>
          {['H', 'D', 'N'].map((f) => (
            <td key={f}>
              {flags.includes(f) ? <Chip $bg="#f00000" $c="#ffd800" $size={11}>{f}</Chip> : <Cell />}
            </td>
          ))}
          <td><Chip $bg={C.teal}>{sym}</Chip></td>
          <td><Chip $bg="#00ff00" $size={10} $b>L</Chip></td>
          <td><Chip $bg="#ff0000" $c="#300000" $size={10} $b>S</Chip></td>
          <td><Chip $bg={C.slate} $size={10} $b>C</Chip></td>
          <td><Cell $c={parseFloat(sprd) < 2 ? '#fff' : C.slate} $b={parseFloat(sprd) < 2}>{sprd}</Cell></td>
          <td><Cell $c={adr > 100 ? '#fff' : C.slate} $b={adr > 100}>{adr}</Cell></td>
          <td>
            <Cell $c={pc} $b={pc === R || pc === G}>
              {pfo}
              <PfoArrow up={up} />
            </Cell>
          </td>
          <td><Cell $c={rc} $b={rc === R || rc === G}>{rate}</Cell></td>
        </tr>
      ))}
    </tbody>
  </BoardTable>
);

const RightGrid = () => (
  <BoardTable $w={495}>
    <Cols widths={[49, 39, 36, 21, 20, 48, 50, 57, 15, 66, 52, 13, 13, 16]} />
    <thead>
      <tr>
        <th />
        <th colSpan={2}><Head $align="right" $pad={20}>Lots</Head></th>
        <th colSpan={2}><Head>Orders</Head></th>
        <th colSpan={2}><Head>Cash</Head></th>
        <th><Head $c="#d80000" $align="right" $pad={6}>$&nbsp;&nbsp; 5.02</Head></th>
        <th />
        <th><Head $align="left" $pad={1}>News</Head></th>
        <th colSpan={4} />
      </tr>
      <tr>
        <th><Head>Charts</Head></th>
        <th><Head $join $bg={C.board} $align="right" $pad={4}>Long</Head></th>
        <th><Head $join $bg={C.board} $align="right">Short</Head></th>
        <th><Head $join $bg={C.board}>L</Head></th>
        <th><Head $join $bg={C.board}>S</Head></th>
        <th><Head $join $bg={C.board} $align="right" $pad={4}>Long</Head></th>
        <th><Head $join $bg={C.board} $align="right">Short</Head></th>
        <th><Head $join $bg={C.board} $align="right" $pad={9}>Total</Head></th>
        <th />
        <th><Head $align="left" $pad={1}>High/60/30</Head></th>
        <th><Head>Bid</Head></th>
        <th><Head $c={C.slate}>B</Head></th>
        <th><Head $c={C.slate}>Q</Head></th>
        <th />
      </tr>
    </thead>
    <tbody>
      {pairs.map(([sym], i) => {
        const p = positions[sym] || noPosition;
        const [bid, bc, dirs] = quotes[i];
        const lot = (v, c) => (parseFloat(v) ? c : C.off);
        return (
          <tr key={sym}>
            <td><Chip $bg={C.teal}>{sym}</Chip></td>
            <td><Val $first $c={lot(p[0], g)}>{p[0]}</Val></td>
            <td><Val $c={lot(p[1], r)}>{p[1]}</Val></td>
            <td><Val $c={lot(p[2], g)}>{p[2]}</Val></td>
            <td><Val $c={lot(p[3], r)}>{p[3]}</Val></td>
            <td><Val $c={lot(p[4], p[7])} $b={p[4] !== '0.00'}>{p[4]}</Val></td>
            <td><Val $c={lot(p[5], p[7])} $b={p[5] !== '0.00'}>{p[5]}</Val></td>
            <td><Val $last $c={p[7]} $b={p[6] !== '0.00'}>{p[6]}</Val></td>
            <td><Chip $bg={C.slate} $size={10} $b>C</Chip></td>
            <td><News>Nothing</News></td>
            <td><Cell $c={bc}>{bid}</Cell></td>
            <td><Cell><Trend dir={dirs[0]} /></Cell></td>
            <td><Cell><Trend dir={dirs[1]} /></Cell></td>
            <td />
          </tr>
        );
      })}
    </tbody>
  </BoardTable>
);

const BoardWindow = () => (
  <WindowFrame title="XAUUSD,H1" x={1} y={0} w={1416} h={640} pad="2px 3px 0 2px">
    <Board>
      <InfoBar>
        <ChartName>XAUUSD,H1</ChartName>
        <Field $w={91} $c="#ffe800" $font={ARIAL}>Trading/AutoR</Field>
        <Field $w={91} $gap={1} $c={C.slate}>M#0</Field>
        <Field $w={119} $gap={574} $c="#e00000" $align="right">-7.25 (-13.81%)</Field>
        <Field $w={21} $gap={3} $c="#00e000" $align="right">0</Field>
        <Field $w={20} $c="#e00000" $align="right">0</Field>
        <InfoButton $w={46} $gap={6} $bg={C.blue} $size={10}>Account</InfoButton>
        <InfoButton $w={11} $bg={C.teal}>?</InfoButton>
        <InfoButton $w={46} $bg={C.blue}>Tracker</InfoButton>
        <ExpertName>
          DBMultiASM(10230)devX
          {icons.smile}
        </ExpertName>
      </InfoBar>
      <SettingsRow>
        <Outline $w={132}>Custom settings details</Outline>
        <Outline $w={761} $gap={1} />
        <InfoButton $w={88} $gap={51} $bg="#00ff00" $c="#003800" $size={12}>CLOSE PROFIT</InfoButton>
        <InfoButton $w={88} $bg="#ff0000" $c="#500000" $size={12}>CLOSE LOSS</InfoButton>
        <InfoButton $w={88} $bg={C.slate} $size={12}>CLOSE ALL</InfoButton>
        <Outline $w={72} $gap={1} $c={C.slate} $size={11}>1214x803</Outline>
      </SettingsRow>
      <Grids>
        <LeftGrid />
        <Middle>
          <MiddleHead />
          <MiddleHead />
          {pairs.map(([sym]) => (
            <MiddleRow key={sym} />
          ))}
        </Middle>
        <RightGrid />
      </Grids>
    </Board>
    <Report>
      <ReportTable>
        <Cols widths={reportCols} />
        <thead>
          <tr>{reportHead.map((h) => <th key={h}>{h}</th>)}</tr>
        </thead>
        <tbody>
          {report.map((row) => (
            <tr key={row[0]}>{row.map((v, i) => <td key={i}>{v}</td>)}</tr>
          ))}
        </tbody>
        <tfoot>
          <tr>
            {['TOTALS:', '6', '', '', '', '', '', '2.95', '0.00', '2.95', '33'].map((v, i) => (
              <td key={i}>{v}</td>
            ))}
          </tr>
        </tfoot>
      </ReportTable>
      <ReportPeriod>
        <span>This Report is From:</span>
        <span>2015.11.18</span>
        <span>Until:</span>
        <span>2015.11.18</span>
      </ReportPeriod>
      <MagicNote>
        <span>Magic:</span>
        <span>All</span>
      </MagicNote>
    </Report>
  </WindowFrame>
);

const prices = [
  ['88.060', 162], ['87.985', 197], ['87.910', 232], ['87.835', 267], ['87.765', 301], ['87.695', 334],
  ['87.620', 368], ['87.545', 403], ['87.395', 474], ['87.320', 509],
];
const fibs = [
  ['(23.6) -  87.828', 265], ['(38.2) -  87.715', 319], ['(50.0) -  87.624', 362],
  ['(61.8) -  87.552', 404], ['(76.4) -  87.419', 457],
];
const shades = [[187, 9], [222, 6], [239, 7], [252, 1], [256, 3], [280, 10], [292, 3], [310, 3], [323, 10], [344, 7], [409, 8]];

const H = ({ y, c, a = 1417, b = 1634, dash }) => (
  <path d={`M${a} ${y + 0.5}H${b}`} stroke={c} strokeDasharray={dash} fill="none" />
);

const PriceChart = () => (
  <svg width="256" height="505" viewBox="1417 131 256 505" fontFamily="Noto Sans, sans-serif" fontSize="9">
    {shades.map(([y, h]) => (
      <rect key={y} x="1417" y={y} width="51" height={h} fill="#2a2600" />
    ))}
    <path d="M1417 133.500H1634M1634.500 133V617M1417 617.500H1634" stroke="#708090" fill="none" />
    <path d="M1464 134h10l-5 5z" fill="#708090" />
    <H y={170} c="#5c5600" />
    <H y={186} c="#008000" b={1478} />
    <H y={186} c="#008000" a={1478} b={1515} dash="5 4 2 3" />
    <H y={186} c="#008000" a={1515} />
    <H y={190} c="#303048" dash="4 4" />
    <H y={213} c="#b00000" />
    <H y={271} c="#0000e0" b={1632} />
    <H y={282} c="#5c5600" />
    <H y={308} c="#3a2c1c" dash="4 4" />
    <H y={323} c="#10b060" b={1569} />
    <H y={323} c="#ff1010" a={1574} b={1632} dash="9 5 3 5" />
    <H y={324} c="#1010ff" />
    <H y={351} c="#f0e010" b={1469} />
    <H y={351} c="#f0e010" a={1480} b={1515} dash="5 3 2 3" />
    <H y={351} c="#f0e010" a={1515} />
    <H y={360} c="#3878c0" b={1482} />
    <H y={360} c="#20e020" a={1482} b={1632} dash="12 7 3 6" />
    <H y={368} c="#0000e0" />
    <H y={386} c="#f00000" dash="14 6 3 6" />
    <H y={392} c="#a050c0" b={1569} />
    <H y={410} c="#0000e0" />
    <H y={421} c="#5c5600" />
    <H y={424} c="#3878c0" b={1482} />
    <H y={424} c="#20c020" a={1482} b={1632} dash="12 7 3 6" />
    <H y={433} c="#500090" />
    <H y={444} c="#708090" />
    <H y={463} c="#0000e0" b={1632} />
    <H y={490} c="#4848a0" />
    <H y={492} c="#f02020" b={1569} />
    <H y={492} c="#f02020" a={1574} b={1632} dash="9 5 3 5" />
    <path d="M1417 393h5l2 1h12l8 3 12 2h6l6 1" stroke="#f00" fill="none" strokeWidth="1.500" />
    <path d="M1417 412l30 3 21 2" stroke="#f00" fill="none" strokeDasharray="4 3" />
    <path d="M1417 435l20 2 14 4 17 4" stroke="#c03030" fill="none" strokeDasharray="3 3" />
    <path d="M1418 426v7M1420 427v6M1422 429v6M1425 429v5M1427 431v8M1430 432v6M1433 431v12M1435 435v18M1437 434v13M1440 438v7M1443 440v4M1446 440v7M1449 440v9M1451 443v10M1454 445v10M1457 446v9M1460 445v11M1463 444v10M1466 441v9" stroke="#f00" fill="none" strokeWidth="1.600" />
    <path d="M1417 454l12 1 15 2 24 0" stroke="#2090ff" fill="none" strokeDasharray="4 4" />
    <path d="M1417 473h8l12 2h16l15 1" stroke="#2090ff" fill="none" strokeWidth="1.500" />
    <path d="M1454 452l1.500 3.500 4-1.500-1.500 4 3.500 1.500-3.500 1.500 1.500 4-4-1.500-1.500 3.500-1.500-3.500-4 1.500 1.500-4-3.500-1.500 3.500-1.500-1.500-4 4 1.500z" fill="#60c0ff" />
    <circle cx="1454" cy="459.500" r="4" fill="#ffff00" />
    <circle cx="1476.500" cy="444.500" r="2.500" fill="#00ff00" />
    <text x="1510" y="184" fill="#0000f0">Daily HIGH</text>
    <text x="1632" y="184" textAnchor="end" fill="#107030" xmlSpace="preserve">(100.0) -  88.011</text>
    {fibs.map(([t, y]) => (
      <text key={y} x="1632" y={y + 3} textAnchor="end" fill="#0000f0" xmlSpace="preserve">{t}</text>
    ))}
    <g fontFamily="Liberation Mono, monospace" fontSize="12">
      <text x="1572" y="335" fill="#18a050" xmlSpace="preserve">TP: 087.7</text>
      <text x="1572" y="403" fill="#a868c8">AV: 087.5</text>
      <text x="1572" y="504" fill="#d02828">S: 087.35</text>
    </g>
    <g fontFamily="Liberation Sans, sans-serif" fontSize="11" fill="#4682b4">
      <text x="1479" y="371" xmlSpace="preserve">01: 087.638,  01.00</text>
      <text x="1479" y="434" xmlSpace="preserve">02: 087.503,  01.00</text>
    </g>
    <path d="M1635 131h38v505h-38z" fill="#000" />
    {prices.map(([t, y]) => (
      <g key={t}>
        <path d={`M1634 ${y + 0.5}h3`} stroke="#708090" />
        <text x="1639" y={y + 3} fill="#8290a0">{t}</text>
      </g>
    ))}
    <path d="M1635 427h36v11h-36z" fill="#4b0082" />
    <path d="M1635 438h36v10h-36z" fill="#708090" />
    <text x="1639" y="436" fill="#000">87.484</text>
    <text x="1639" y="446" fill="#000">87.461</text>
    <path d="M1417 524h60v7h-60zM1417 536h60v11h-60z" fill="#002c2c" />
    <H y={533} c="#5c5600" />
    <H y={542} c="#203c3c" dash="4 4" />
    <H y={548} c="#708090" />
    <H y={554} c="#900000" dash="4 4" />
    <H y={560} c="#900000" dash="4 4" />
    <path d="M1417 587h5l1 2 2-8h7l4-5 3 1h6" stroke="#f0f020" fill="none" />
    <H y={608} c="#900000" dash="4 4" />
    <H y={613} c="#900000" dash="4 4" />
    <path d="M1417 612l6 4h26" stroke="#2080e0" fill="none" strokeWidth="2" />
    <text x="1421" y="630" fill="#8593a1">18 Nov</text>
  </svg>
);

const ChartHolder = styled.div`
  display: flex;
  justify-content: flex-end;
`;

const ParamsDialog = () => (
  <Dialog role="dialog" aria-label="Expert">
    <DialogTitle>
      <DialogName>Expert - Sov_Doska_v1.03withMagic</DialogName>
      <DialogButton aria-label="Справка">?</DialogButton>
      <DialogButton aria-label="Закрыть">
        <Svg w={11} h={11}>
          <path d="M.5.500l10 10M10.500.500l-10 10" stroke="#888" />
        </Svg>
      </DialogButton>
    </DialogTitle>
    <Tabs role="tablist">
      <Tab role="tab" $w={80}>О программе</Tab>
      <Tab role="tab" $w={46}>Общие</Tab>
      <Tab role="tab" $w={120} $on>Входные параметры</Tab>
    </Tabs>
    <Pane>
      <ParamBox>
        <ParamTable>
          <Cols widths={[226]} rest />
          <thead>
            <tr>
              <th>Переменная</th>
              <th>Значение</th>
            </tr>
          </thead>
          <tbody>
            {params.map(([kind, name, value]) => (
              <tr key={name}>
                <td>
                  <ParamName>
                    <ParamIcon kind={kind} />
                    {name}
                  </ParamName>
                </td>
                <td>{value}</td>
              </tr>
            ))}
          </tbody>
        </ParamTable>
      </ParamBox>
      <SideButtons>
        <PushButton $w={103}>Загрузить</PushButton>
        <PushButton $w={103}>Сохранить</PushButton>
      </SideButtons>
    </Pane>
    <DialogFooter>
      <PushButton>OK</PushButton>
      <PushButton>Отмена</PushButton>
      <PushButton>Сброс</PushButton>
    </DialogFooter>
    <SizeGrip>
      <Svg w={8} h={8}>
        <path d="M6 0h2v2H6zM3 3h2v2H3zM6 3h2v2H6zM0 6h2v2H0zM3 6h2v2H3zM6 6h2v2H6z" fill="#bdbdbd" />
      </Svg>
    </SizeGrip>
  </Dialog>
);

const OrdersTerminal = () => (
  <Terminal>
    <Side>
      <SideClose aria-label="Закрыть панель">
        <Svg w={6} h={7}>
          <path d="M.5.500l5 6M5.500.500l-5 6" stroke="#000" strokeWidth="1.600" />
        </Svg>
      </SideClose>
      <SideLabel>
        <SideText>нал</SideText>
      </SideLabel>
    </Side>
    <OrdersBox>
      <Orders>
        <Cols widths={orderCols} rest />
        <thead>
          <tr>
            {orderHead.map((h, i) => (
              <th key={i}>
                {h}
                {i === 0 && <>&nbsp;&nbsp;&nbsp; /</>}
              </th>
            ))}
          </tr>
        </thead>
        <tbody>
          {orders.map(([id, time, type, sym, open, sl, tp, price, profit, note, hit]) => (
            <tr key={id}>
              <td>
                <OrderId>
                  <OrderIcon buy={type === 'buy'} />
                  {id}
                </OrderId>
              </td>
              <td>2015.11.18 {time}</td>
              <td>{type}</td>
              <td>0.01</td>
              <td>{sym}</td>
              <td>{open}</td>
              <td data-hit={hit === 'sl' ? 'sl' : undefined}>{sl}</td>
              <td data-hit={hit === 'tp' ? 'tp' : undefined}>{tp}</td>
              <td>{price}</td>
              <td>0.00</td>
              <td>0.00</td>
              <td>
                <ProfitCell>
                  {profit}
                  <Svg w={8} h={8}>
                    <path d="M1 1l6 6M7 1L1 7" stroke="#999" strokeWidth="2" />
                  </Svg>
                </ProfitCell>
              </td>
              <td>{note}</td>
            </tr>
          ))}
        </tbody>
        <tfoot>
          <tr>
            <td colSpan={11}>
              <Summary>
                <Svg w={13} h={15}>
                  <rect x="0.500" y="0.500" width="11" height="13" fill="#fff" stroke="#777" />
                  <path d="M4.500 3h3v4h2.500L6 11 2 7h2.500z" fill="#e8501c" stroke="#a02c08" strokeWidth=".6" />
                </Svg>
                Баланс: 52.48 USD&nbsp;&nbsp; Средства: 47.46&nbsp;&nbsp; Маржа: 18.95&nbsp;&nbsp; Свободная маржа: 28.51&nbsp;&nbsp; Уровень: 250.46%
              </Summary>
            </td>
            <td>
              <ProfitCell>
                -5.02
                <Svg w={11} h={8} />
              </ProfitCell>
            </td>
            <td />
          </tr>
        </tfoot>
      </Orders>
    </OrdersBox>
  </Terminal>
);

export default function App() {
  return (
    <Page>
      <GlobalStyle />
      <TitleBar>
        {icons.app}
        <AppTitle>675405: FXOpen-Real1 - XAUUSD,H1</AppTitle>
        <CaptionButton aria-label="Свернуть">
          <Svg w={11} h={11}><path d="M0 6.500h11" stroke="#888" /></Svg>
        </CaptionButton>
        <CaptionButton aria-label="Восстановить">
          <Svg w={11} h={11}><path d="M.5 2.500h8v8h-8zM2.500 2V.5h8v8H9" stroke="#888" fill="none" /></Svg>
        </CaptionButton>
        <CaptionButton aria-label="Закрыть">
          <Svg w={11} h={11}><path d="M.5.500l10 10M10.500.500l-10 10" stroke="#888" /></Svg>
        </CaptionButton>
      </TitleBar>
      <MenuBar>
        {['Файл', 'Вид', 'Вставка', 'Графики', 'Сервис', 'Окно', 'Справка'].map((m) => (
          <button key={m}>{m}</button>
        ))}
      </MenuBar>
      <TopBars />
      <Desktop>
        <WindowFrame title="AUDJPY,M1" x={701} y={0} w={982} h={547}>
          <ChartHolder>
            <PriceChart />
          </ChartHolder>
        </WindowFrame>
        <BoardWindow />
        <WindowFrame title="XAUUSD,H1" x={1443} y={421} w={326} h={260} pad="2px 0 0 2px">
          <SmallChart>
            <Plot>
              <PlotLabel $gap={4} $font={TAHOMA}>
                <Svg w={7} h={4}><path d="M0 0h7L3.500 4z" fill="#8593a1" /></Svg>
                XAUUSD,H1
              </PlotLabel>
              <PlotLabel $gap={2} $font={ARIAL}>
                <span>Sov_Doska_v1.03withMagic</span>
                {icons.smile}
              </PlotLabel>
            </Plot>
            <Axis>
              {['1208.20', '1205.05', '1201.90', '1198.75'].map((v) => (
                <Tick key={v}>{v}</Tick>
              ))}
            </Axis>
          </SmallChart>
        </WindowFrame>
        <ParamsDialog />
      </Desktop>
      <ChartTabs>
        <ChartTab $w={84} $bar>XAUUSD,H1</ChartTab>
        <ChartTab $w={76} $bar>EURSEK,H1</ChartTab>
        <ChartTab $w={80}>XAUUSD,H1</ChartTab>
        <ChartTab $w={79} $on>XAUUSD,H1</ChartTab>
        <ChartTab $w={81} $bar>AUDJPY,M1</ChartTab>
        <TabArrows>
          <Svg w={5} h={7}><path d="M4 0v7L0 3.500z" fill="#888" /></Svg>
          <Svg w={5} h={7}><path d="M0 0v7l4-3.500z" fill="#888" /></Svg>
        </TabArrows>
      </ChartTabs>
      <OrdersTerminal />
    </Page>
  );
}
